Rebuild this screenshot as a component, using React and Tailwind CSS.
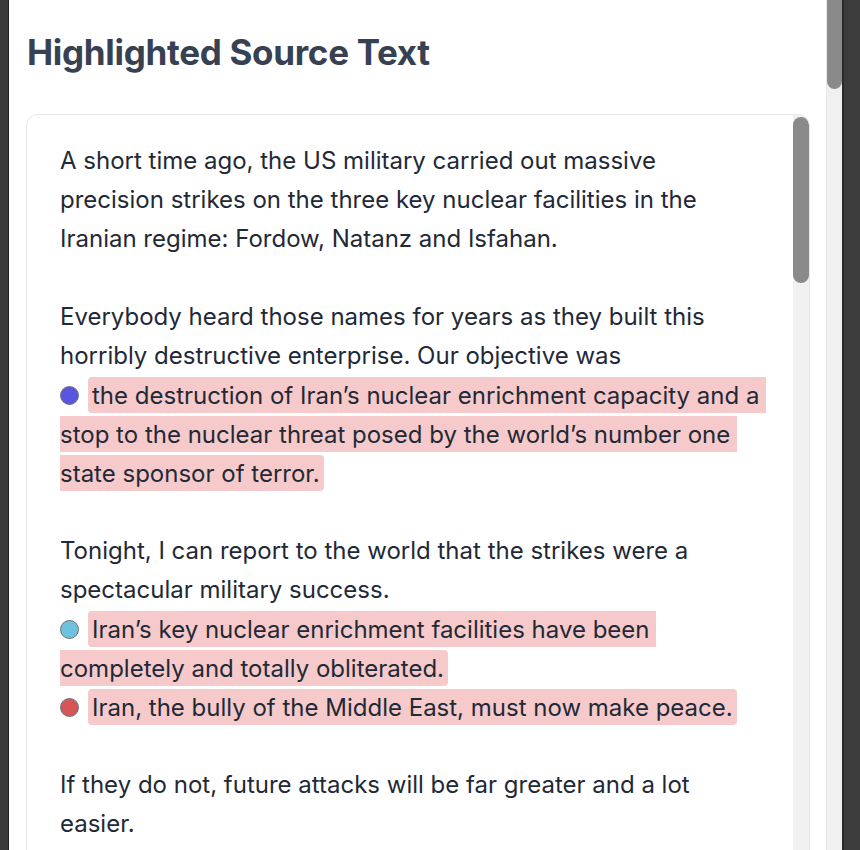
/**
 * SourcePanel -- side panel showing the source transcript with
 * highlighted claims and their colour markers.
 */

const FONT = { fontFamily: 'Inter, "Noto Sans", sans-serif' };

function Dot({ color }) {
  return (
    <span
      className={`inline-block w-[19px] h-[19px] rounded-full border-[1.5px] border-[#6b7280] align-middle mr-[9px] -mt-[2px] ${color}`}
    />
  );
}

function Mark({ children }) {
  return (
    <span className="bg-[#f6caca] rounded-[4px] px-1 py-[3.5px]">{children}</span>
  );
}

export default function App() {
  return (
    <div className="flex w-[860px] h-[850px] overflow-hidden bg-white" style={FONT}>
      {/* left window edge */}
      <div className="w-[9px] shrink-0 bg-[#3a3a3a] border-r border-[#1f1f1f]" />

      <main className="flex-1 min-w-0 pl-[17px] pr-[16px]">
        <h2 className="mt-[35px] ml-[1px] text-[35px] leading-[35px] font-bold text-[#374151] tracking-[-0.3px]">
          Highlighted Source Text
        </h2>

        {/* Text card with its own scrollbar */}
        <div className="mt-[44px] h-[800px] flex rounded-xl border border-[#e5e7eb] overflow-hidden">
          <div className="flex-1 min-w-0 pl-[33px] pt-[26px] pr-4">
            <div className="whitespace-pre-wrap text-[24px] leading-[39px] text-[#1f2937]">
              {'A short time ago, the US military carried out massive\nprecision strikes on the three key nuclear facilities in the\nIranian regime: Fordow, Natanz and Isfahan.\n\nEverybody heard those names for years as they built this\nhorribly destructive enterprise. Our objective was\n'}
              <Dot color="bg-[#5a55e0]" />
              <Mark>{'the destruction of Iran’s nuclear enrichment capacity and a \nstop to the nuclear threat posed by the world’s number one \nstate sponsor of terror.'}</Mark>
              {'\n\nTonight, I can report to the world that the strikes were a\nspectacular military success.\n'}
              <Dot color="bg-[#6ec2dd]" />
              <Mark>{'Iran’s key nuclear enrichment facilities have been \ncompletely and totally obliterated.'}</Mark>
              {'\n'}
              <Dot color="bg-[#d65656]" />
              <Mark>{'Iran, the bully of the Middle East, must now make peace.'}</Mark>
              {'\n\nIf they do not, future attacks will be far greater and a lot\neasier.'}
            </div>
          </div>
          <div className="w-4 shrink-0 bg-[#f1f1f1] pt-[2px]">
            <div className="h-[166px] rounded-full bg-[#8a8a8a]" />
          </div>
        </div>
      </main>

      {/* page scrollbar */}
      <div className="w-4 shrink-0 bg-[#f0f0f0] border-l border-[#e8e8e8]">
        <div className="h-[89px] rounded-b-full bg-[#8a8a8a]" />
      </div>

      {/* right window edge */}
      <div className="w-[18px] shrink-0 bg-[#3c3c3c] border-l-2 border-[#2a2a2a]" />
    </div>
  );
}
